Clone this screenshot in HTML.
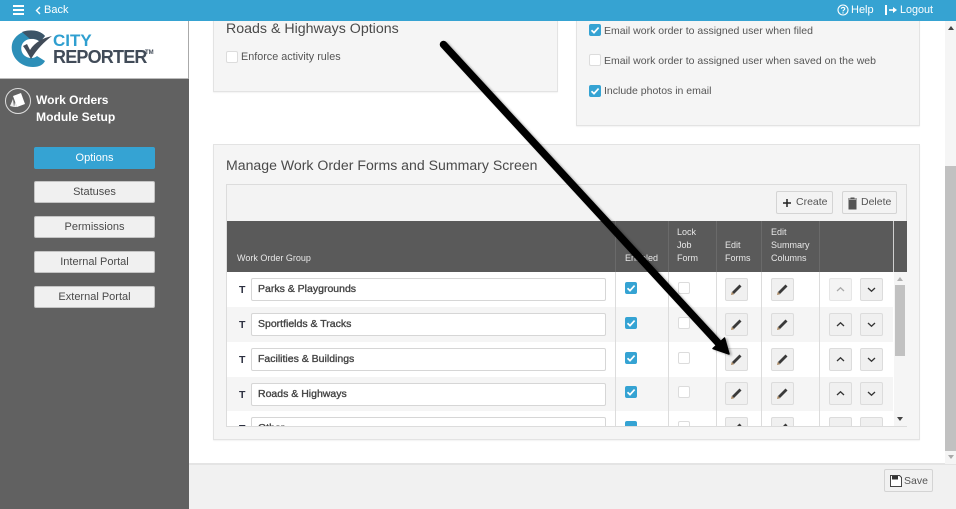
<!DOCTYPE html>
<html><head><meta charset="utf-8"><style>
*{box-sizing:border-box}
html,body{margin:0;padding:0}
body{width:956px;height:509px;overflow:hidden;position:relative;background:#fff;font-family:"Liberation Sans",sans-serif;color:#444;font-size:12px}
.a{position:absolute}
.t{position:absolute;white-space:nowrap}
.panel{position:absolute;background:#f5f5f5;border:1px solid #e3e3e3;box-shadow:0 1px 1px rgba(0,0,0,.05)}
.side{position:absolute;left:34px;width:121px;height:22px;background:#f0f0f0;border:1px solid #c4c4c4;border-radius:2px;text-align:center;line-height:21px;font-size:11px;color:#4a4a4a}
.cb{position:absolute;width:12px;height:12px;background:#fff;border:1px solid #dcdcdc;border-radius:2px}
.cb.on{background:#35a3d3;border-color:#35a3d3}
.cb svg{position:absolute;left:0;top:0;width:10px;height:10px}
.row{position:absolute;left:227px;width:666px;height:35px}
.inp{position:absolute;left:251px;width:355px;height:23px;background:#fff;border:1px solid #d6d6d6;border-radius:2px;line-height:21px;padding-left:6px;font-size:10.5px;color:#444;-webkit-text-stroke:.35px #444;white-space:nowrap;overflow:hidden}
.tt{position:absolute;left:239px;font-weight:bold;font-size:10.5px;color:#2c3040}
.btn{position:absolute;width:23px;height:23px;background:#f0f0f0;border:1px solid #dcdcdc;border-radius:2px}
.btn svg{position:absolute;left:2px;top:2px;width:17px;height:17px}
.dis{background:#f4f4f4;border-color:#e6e6e6}
.vl{position:absolute;width:1px;background:#dcdcdc;top:272px;height:154px}
.hd{position:absolute;color:#e8e8e8;font-size:9px;line-height:13px;white-space:nowrap}
</style></head><body>

<!-- main panels -->
<div class="panel" style="left:213px;top:10px;width:345px;height:82px"></div>
<div class="t" style="left:226px;top:21px;font-size:14.2px;color:#4a4a4a">Roads &amp; Highways Options</div>
<div class="cb" style="left:226px;top:51px"></div>
<div class="t" style="left:241px;top:51px;font-size:10.8px;color:#555">Enforce activity rules</div>

<div class="panel" style="left:576px;top:10px;width:344px;height:116px"></div>
<div class="cb on" style="left:589px;top:24px"><svg viewBox="0 0 10 10"><path d="M1.500 5.200 4 7.600 8.600 2.600" fill="none" stroke="#fff" stroke-width="1.700"/></svg></div>
<div class="t" style="left:604px;top:25px;font-size:10.5px;color:#555">Email work order to assigned user when filed</div>
<div class="cb" style="left:589px;top:54px"></div>
<div class="t" style="left:604px;top:55px;font-size:10.5px;color:#555">Email work order to assigned user when saved on the web</div>
<div class="cb on" style="left:589px;top:85px"><svg viewBox="0 0 10 10"><path d="M1.500 5.200 4 7.600 8.600 2.600" fill="none" stroke="#fff" stroke-width="1.700"/></svg></div>
<div class="t" style="left:604px;top:85px;font-size:10.5px;color:#555">Include photos in email</div>

<div class="panel" style="left:213px;top:144px;width:707px;height:296px"></div>
<div class="t" style="left:226px;top:157px;font-size:14.1px;color:#4a4a4a">Manage Work Order Forms and Summary Screen</div>

<!-- table -->
<div class="a" style="left:226px;top:184px;width:681px;height:243px;border:1px solid #dcdcdc;background:#f3f3f3"></div>
<div class="a" style="left:776px;top:191px;width:57px;height:23px;background:#f3f3f3;border:1px solid #d4d4d4;border-radius:2px"></div>
<svg class="a" style="left:782px;top:198px" width="10" height="10" viewBox="0 0 10 10"><path d="M5 1v8M1 5h8" stroke="#222" stroke-width="1.500"/></svg>
<div class="t" style="left:796px;top:196px;font-size:10.5px;color:#555">Create</div>
<div class="a" style="left:842px;top:191px;width:55px;height:23px;background:#f3f3f3;border:1px solid #d4d4d4;border-radius:2px"></div>
<svg class="a" style="left:847px;top:197px" width="11" height="13" viewBox="0 0 11 13"><path d="M1 2h9M4 2V1h3v1M2 3.500h7V12H2z" fill="#555" stroke="#555" stroke-width="1"/></svg>
<div class="t" style="left:861px;top:196px;font-size:10.5px;color:#555">Delete</div>

<div class="a" style="left:227px;top:221px;width:680px;height:51px;background:#5a5a5a"></div>
<div class="a" style="left:893px;top:221px;width:1px;height:51px;background:#cfcfcf"></div>
<div class="a" style="left:615px;top:221px;width:1px;height:51px;background:#6a6a6a"></div>
<div class="a" style="left:668px;top:221px;width:1px;height:51px;background:#6a6a6a"></div>
<div class="a" style="left:716px;top:221px;width:1px;height:51px;background:#6a6a6a"></div>
<div class="a" style="left:761px;top:221px;width:1px;height:51px;background:#6a6a6a"></div>
<div class="a" style="left:819px;top:221px;width:1px;height:51px;background:#6a6a6a"></div>
<div class="hd" style="left:237px;top:252px">Work Order Group</div>
<div class="hd" style="left:625px;top:252px">Enabled</div>
<div class="hd" style="left:677px;top:226px">Lock<br>Job<br>Form</div>
<div class="hd" style="left:725px;top:239px">Edit<br>Forms</div>
<div class="hd" style="left:771px;top:226px">Edit<br>Summary<br>Columns</div>

<div class="a" style="left:227px;top:272px;width:680px;height:154px;background:#fff"></div>
<div class="row" style="top:307px;background:#f5f5f5"></div>
<div class="row" style="top:377px;height:34px;background:#f5f5f5"></div>
<div class="vl" style="left:615px"></div><div class="vl" style="left:668px"></div><div class="vl" style="left:716px"></div><div class="vl" style="left:761px"></div><div class="vl" style="left:819px"></div>

<div class="tt" style="top:284px">T</div><div class="inp" style="top:278px">Parks &amp; Playgrounds</div>
<div class="tt" style="top:319px">T</div><div class="inp" style="top:313px">Sportfields &amp; Tracks</div>
<div class="tt" style="top:354px">T</div><div class="inp" style="top:348px">Facilities &amp; Buildings</div>
<div class="tt" style="top:389px">T</div><div class="inp" style="top:383px">Roads &amp; Highways</div>

<div class="cb on" style="left:625px;top:282px"><svg viewBox="0 0 10 10"><path d="M1.500 5.200 4 7.600 8.600 2.600" fill="none" stroke="#fff" stroke-width="1.700"/></svg></div>
<div class="cb on" style="left:625px;top:317px"><svg viewBox="0 0 10 10"><path d="M1.500 5.200 4 7.600 8.600 2.600" fill="none" stroke="#fff" stroke-width="1.700"/></svg></div>
<div class="cb on" style="left:625px;top:352px"><svg viewBox="0 0 10 10"><path d="M1.500 5.200 4 7.600 8.600 2.600" fill="none" stroke="#fff" stroke-width="1.700"/></svg></div>
<div class="cb on" style="left:625px;top:386px"><svg viewBox="0 0 10 10"><path d="M1.500 5.200 4 7.600 8.600 2.600" fill="none" stroke="#fff" stroke-width="1.700"/></svg></div>
<div class="cb" style="left:678px;top:282px"></div>
<div class="cb" style="left:678px;top:317px"></div>
<div class="cb" style="left:678px;top:352px"></div>
<div class="cb" style="left:678px;top:386px"></div>

<!-- pencils -->
<div class="btn" style="left:725px;top:278px"><svg viewBox="0 0 17 17"><path d="M5 12 12.500 4.500" stroke="#3a3a3a" stroke-width="2.800"/><path d="M3 14 3.800 10.800 6.200 13.200z" fill="#a8865f"/></svg></div>
<div class="btn" style="left:771px;top:278px"><svg viewBox="0 0 17 17"><path d="M5 12 12.500 4.500" stroke="#3a3a3a" stroke-width="2.800"/><path d="M3 14 3.800 10.800 6.200 13.200z" fill="#a8865f"/></svg></div>
<div class="btn" style="left:725px;top:313px"><svg viewBox="0 0 17 17"><path d="M5 12 12.500 4.500" stroke="#3a3a3a" stroke-width="2.800"/><path d="M3 14 3.800 10.800 6.200 13.200z" fill="#a8865f"/></svg></div>
<div class="btn" style="left:771px;top:313px"><svg viewBox="0 0 17 17"><path d="M5 12 12.500 4.500" stroke="#3a3a3a" stroke-width="2.800"/><path d="M3 14 3.800 10.800 6.200 13.200z" fill="#a8865f"/></svg></div>
<div class="btn" style="left:725px;top:348px"><svg viewBox="0 0 17 17"><path d="M5 12 12.500 4.500" stroke="#3a3a3a" stroke-width="2.800"/><path d="M3 14 3.800 10.800 6.200 13.200z" fill="#a8865f"/></svg></div>
<div class="btn" style="left:771px;top:348px"><svg viewBox="0 0 17 17"><path d="M5 12 12.500 4.500" stroke="#3a3a3a" stroke-width="2.800"/><path d="M3 14 3.800 10.800 6.200 13.200z" fill="#a8865f"/></svg></div>
<div class="btn" style="left:725px;top:382px"><svg viewBox="0 0 17 17"><path d="M5 12 12.500 4.500" stroke="#3a3a3a" stroke-width="2.800"/><path d="M3 14 3.800 10.800 6.200 13.200z" fill="#a8865f"/></svg></div>
<div class="btn" style="left:771px;top:382px"><svg viewBox="0 0 17 17"><path d="M5 12 12.500 4.500" stroke="#3a3a3a" stroke-width="2.800"/><path d="M3 14 3.800 10.800 6.200 13.200z" fill="#a8865f"/></svg></div>

<!-- arrows -->
<div class="btn dis" style="left:829px;top:278px"><svg viewBox="0 0 17 17"><path d="M5 10 8.500 6.800 12 10" fill="none" stroke="#aaa" stroke-width="1.300"/></svg></div>
<div class="btn" style="left:860px;top:278px"><svg viewBox="0 0 17 17"><path d="M5 7 8.500 10.200 12 7" fill="none" stroke="#333" stroke-width="1.300"/></svg></div>
<div class="btn" style="left:829px;top:313px"><svg viewBox="0 0 17 17"><path d="M5 10 8.500 6.800 12 10" fill="none" stroke="#333" stroke-width="1.300"/></svg></div>
<div class="btn" style="left:860px;top:313px"><svg viewBox="0 0 17 17"><path d="M5 7 8.500 10.200 12 7" fill="none" stroke="#333" stroke-width="1.300"/></svg></div>
<div class="btn" style="left:829px;top:348px"><svg viewBox="0 0 17 17"><path d="M5 10 8.500 6.800 12 10" fill="none" stroke="#333" stroke-width="1.300"/></svg></div>
<div class="btn" style="left:860px;top:348px"><svg viewBox="0 0 17 17"><path d="M5 7 8.500 10.200 12 7" fill="none" stroke="#333" stroke-width="1.300"/></svg></div>
<div class="btn" style="left:829px;top:382px"><svg viewBox="0 0 17 17"><path d="M5 10 8.500 6.800 12 10" fill="none" stroke="#333" stroke-width="1.300"/></svg></div>
<div class="btn" style="left:860px;top:382px"><svg viewBox="0 0 17 17"><path d="M5 7 8.500 10.200 12 7" fill="none" stroke="#333" stroke-width="1.300"/></svg></div>

<!-- clipped last row -->
<div class="a" style="left:227px;top:411px;width:666px;height:15px;overflow:hidden">
  <div class="tt" style="left:12px;top:12px">T</div>
  <div class="inp" style="left:24px;top:6px">Other</div>
  <div class="cb on" style="left:398px;top:10px"></div>
  <div class="cb" style="left:451px;top:10px"></div>
  <div class="btn" style="left:498px;top:6px"><svg viewBox="0 0 17 17"><path d="M5 12 12.500 4.500" stroke="#3a3a3a" stroke-width="2.800"/></svg></div>
  <div class="btn" style="left:544px;top:6px"><svg viewBox="0 0 17 17"><path d="M5 12 12.500 4.500" stroke="#3a3a3a" stroke-width="2.800"/></svg></div>
  <div class="btn" style="left:602px;top:6px"></div>
  <div class="btn" style="left:633px;top:6px"></div>
</div>
<div class="a" style="left:226px;top:426px;width:681px;height:1px;background:#dcdcdc"></div>

<!-- inner scrollbar -->
<div class="a" style="left:894px;top:272px;width:13px;height:154px;background:#f5f5f5"></div>
<div class="a" style="left:895px;top:285px;width:10px;height:71px;background:#c1c1c1"></div>
<svg class="a" style="left:896px;top:276px" width="8" height="6"><path d="M4 1 7 5H1z" fill="#b0b0b0"/></svg>
<svg class="a" style="left:896px;top:416px" width="8" height="6"><path d="M1 1H7L4 5z" fill="#444"/></svg>

<!-- footer -->
<div class="a" style="left:189px;top:463px;width:767px;height:46px;background:#f1f1f1;border-top:2px solid #e4e4e4"></div>
<div class="a" style="left:884px;top:469px;width:49px;height:23px;background:#f1f1f1;border:1px solid #d4d4d4;border-radius:2px"></div>
<svg class="a" style="left:890px;top:475px" width="12" height="12" viewBox="0 0 12 12"><path d="M.5.500h9l2 2v9H.500z" fill="#fff" stroke="#444"/><path d="M2 1h6v3.500H2z" fill="#333"/></svg>
<div class="t" style="left:904px;top:475px;font-size:10.500px;color:#555">Save</div>

<!-- page scrollbar -->
<div class="a" style="left:945px;top:21px;width:11px;height:443px;background:#f5f5f5"></div>
<div class="a" style="left:945px;top:166px;width:11px;height:285px;background:#c1c1c1"></div>
<svg class="a" style="left:947px;top:25px" width="8" height="6"><path d="M4 1 7 5H1z" fill="#444"/></svg>
<svg class="a" style="left:947px;top:454px" width="8" height="6"><path d="M1 1H7L4 5z" fill="#aaa"/></svg>

<!-- big arrow -->
<svg class="a" style="left:0;top:0;filter:drop-shadow(2px 1px 1px rgba(0,0,0,.3))" width="956" height="509" viewBox="0 0 956 509">
<path d="M443.500 44.500 721 346" stroke="#000" stroke-width="7.500" stroke-linecap="round" fill="none"/>
<path d="M729 354 724.500 338 713 348.500z" fill="#000" stroke="#000" stroke-width="1.500" stroke-linejoin="round"/>
</svg>

<!-- top bar -->
<div class="a" style="left:0;top:0;width:956px;height:21px;background:#36a3d2"></div>
<div class="a" style="left:13px;top:5px;width:11px;height:2px;background:#fff"></div>
<div class="a" style="left:13px;top:9px;width:11px;height:2px;background:#fff"></div>
<div class="a" style="left:13px;top:13px;width:11px;height:2px;background:#fff"></div>
<svg class="a" style="left:35px;top:6px" width="6" height="9" viewBox="0 0 6 9"><path d="M5 1 1.500 4.500 5 8" fill="none" stroke="#fff" stroke-width="1.400"/></svg>
<div class="t" style="left:44px;top:4px;font-size:11px;color:#fff">Back</div>
<svg class="a" style="left:837px;top:4px" width="12" height="12" viewBox="0 0 12 12"><circle cx="6" cy="6" r="5" fill="none" stroke="#fff" stroke-width="1.100"/><path d="M4.300 4.700C4.300 3 7.800 3 7.800 4.800 7.800 6 6 6 6 7.400M6 8.300v1.200" fill="none" stroke="#fff" stroke-width="1.100"/></svg>
<div class="t" style="left:851px;top:4px;font-size:11px;color:#fff">Help</div>
<svg class="a" style="left:885px;top:4px" width="13" height="12" viewBox="0 0 13 12"><path d="M1 1v10" stroke="#fff" stroke-width="2"/><path d="M4 6h5" stroke="#fff" stroke-width="1.600"/><path d="M8 3l4 3-4 3z" fill="#fff"/></svg>
<div class="t" style="left:900px;top:4px;font-size:10.800px;color:#fff">Logout</div>

<!-- sidebar -->
<div class="a" style="left:0;top:21px;width:189px;height:488px;background:#616161"></div>
<div class="a" style="left:0;top:21px;width:188px;height:58px;background:#fff;border-bottom:1px solid #bbb"></div>
<div class="a" style="left:188px;top:21px;width:1px;height:58px;background:#aaa"></div>
<svg class="a" style="left:10px;top:29px" width="42" height="40" viewBox="0 0 42 40">
<path d="M35 7C28 -1 10 -1 3 12 -2 24 8 38 23 38 29 38 33 36 35 32L27 27C24 30 17 30 13 25 9 19 12 11 20 10 25 9.500 28 11 30 13z" fill="#2d8fb8"/>
<path d="M35 7C30 1 20 0 12 3L20 10C25 9.500 28 11 30 13z" fill="#3c5568"/>
<path d="M13 17 17 15 20 21C25 13 33 9 42 7 34 13 27 20 21 30 18 25 16 21 13 17z" fill="#414b58"/>
</svg>
<div class="t" style="left:53px;top:33px;font-size:17px;line-height:15px;font-weight:bold;color:#2f9fd0">CITY</div>
<div class="t" style="left:53px;top:48px;font-size:18px;line-height:18px;font-weight:bold;color:#414b58;letter-spacing:-.8px">REPORTER</div>
<div class="t" style="left:145px;top:50px;font-size:6px;line-height:7px;font-weight:bold;color:#414b58">TM</div>

<svg class="a" style="left:4px;top:87px" width="28" height="28" viewBox="0 0 28 28"><circle cx="14" cy="14" r="12.500" fill="none" stroke="#ddd" stroke-width="1"/><path d="M9 9 17 6 21 17 13 20z" fill="#fff"/><path d="M6 19 9 12 10 20zM10 20 11 15 13 20z" fill="#eee"/></svg>
<div class="t" style="left:36px;top:93px;font-size:12px;font-weight:bold;color:#fff">Work Orders</div>
<div class="t" style="left:36px;top:110px;font-size:12.100px;font-weight:bold;color:#fff">Module Setup</div>

<div class="side" style="top:147px;background:#35a3d3;border-color:#35a3d3;color:#fff">Options</div>
<div class="side" style="top:181px">Statuses</div>
<div class="side" style="top:216px">Permissions</div>
<div class="side" style="top:251px">Internal Portal</div>
<div class="side" style="top:286px">External Portal</div>
</body></html>
